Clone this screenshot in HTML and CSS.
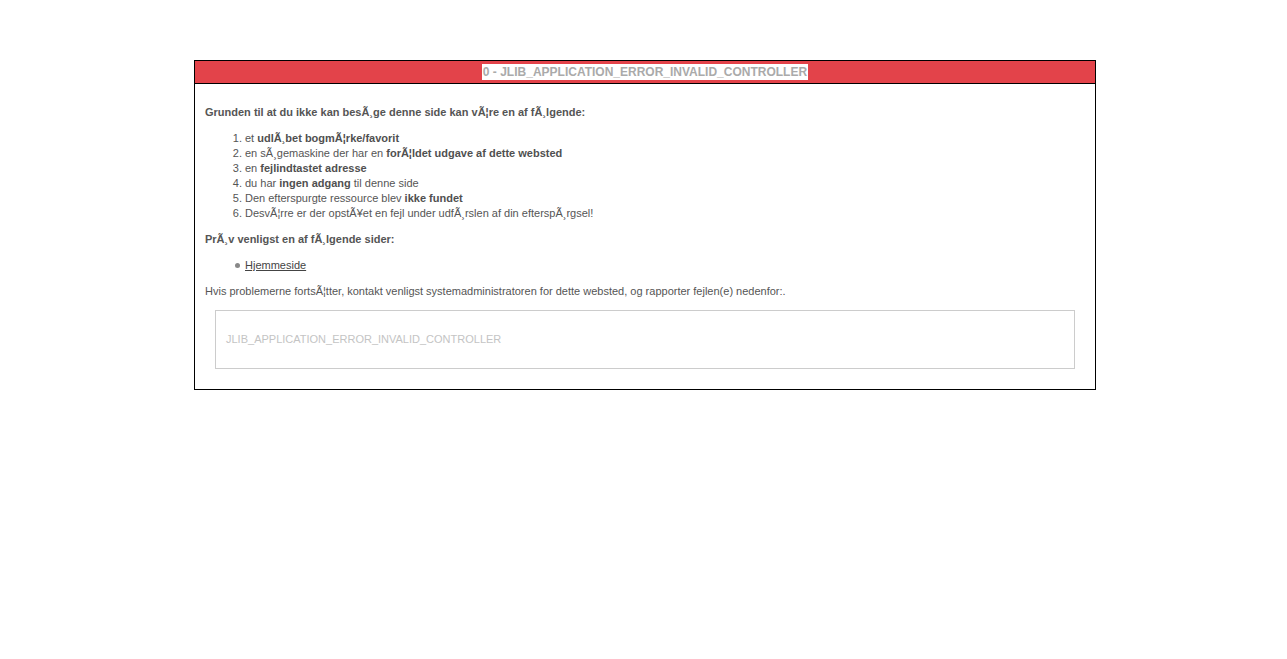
FILE: index.html
```html
<!DOCTYPE html>
<html lang="da">
<head>
<meta charset="utf-8">
<title>0 - JLIB_APPLICATION_ERROR_INVALID_CONTROLLER</title>
<link rel="stylesheet" href="styles.css">
</head>
<body>
<div class="outline">
  <div class="errorbox-header"><span class="errorbox-title">0 - JLIB_APPLICATION_ERROR_INVALID_CONTROLLER</span></div>
  <div class="errorbox-body">
    <p class="strong">Grunden til at du ikke kan besÃ¸ge denne side kan vÃ¦re en af fÃ¸lgende:</p>
    <ol>
      <li>et <strong>udlÃ¸bet bogmÃ¦rke/favorit</strong></li>
      <li>en sÃ¸gemaskine der har en <strong>forÃ¦ldet udgave af dette websted</strong></li>
      <li>en <strong>fejlindtastet adresse</strong></li>
      <li>du har <strong>ingen adgang</strong> til denne side</li>
      <li>Den efterspurgte ressource blev <strong>ikke fundet</strong></li>
      <li>DesvÃ¦rre er der opstÃ¥et en fejl under udfÃ¸rslen af din efterspÃ¸rgsel!</li>
    </ol>
    <p class="strong">PrÃ¸v venligst en af fÃ¸lgende sider:</p>
    <ul>
      <li><a href="#" class="home-link">Hjemmeside</a></li>
    </ul>
    <p>Hvis problemerne fortsÃ¦tter, kontakt venligst systemadministratoren for dette websted, og rapporter fejlen(e) nedenfor:.</p>
    <div class="techinfo">
      <p>JLIB_APPLICATION_ERROR_INVALID_CONTROLLER</p>
    </div>
  </div>
</div>
</body>
</html>
```

FILE: styles.css
```css
html, body {
  background: #fff;
}

body {
  margin: 0;
  padding-left: 3px;
  font-family: "Liberation Sans", Arial, sans-serif;
  font-size: 11px;
  line-height: 15px;
  color: #555;
}

.outline {
  width: 900px;
  margin: 60px auto 0;
  border: 1px solid #000;
}

.errorbox-header {
  background: #e3434a;
  border-bottom: 1px solid #000;
  height: 22px;
  display: flex;
  align-items: center;
  justify-content: center;
}

.errorbox-title {
  background: #fff;
  color: #aaa;
  font-weight: bold;
  font-size: 12px;
  line-height: 16px;
  padding: 0 1px;
}

.errorbox-body {
  padding: 10px;
}

.errorbox-body p {
  margin: 11px 0;
}

.strong {
  font-weight: bold;
}

strong {
  font-weight: bold;
  color: #505050;
}

ol, ul {
  margin: 11px 0;
  padding-left: 40px;
}

ul {
  list-style: none;
}

ul li {
  display: flex;
  align-items: center;
}

ul li::before {
  content: "";
  width: 5px;
  height: 5px;
  border-radius: 50%;
  background: #888;
  margin-left: -10px;
  margin-right: 5px;
}

.home-link {
  color: #444;
  text-decoration: underline;
}

.techinfo {
  margin: 0 10px 10px;
  padding: 10px;
  border: 1px solid #ccc;
  color: #c4c4c4;
}
```
